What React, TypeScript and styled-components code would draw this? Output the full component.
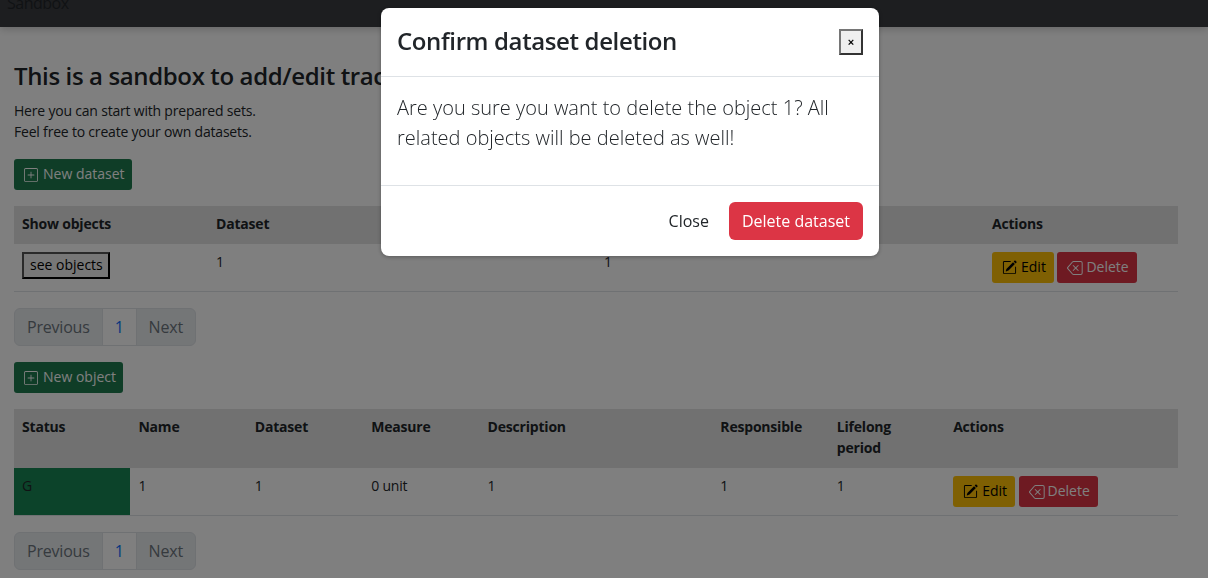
import React from "react";
import styled, { createGlobalStyle } from "styled-components";
import { BsBackspace, BsPencilSquare, BsPlusSquare } from "react-icons/bs";

const GlobalStyle = createGlobalStyle`
  html, body {
    margin: 0;
    height: 100%;
    overflow: hidden;
    background: #ffffff;
  }
  body {
    font-family: "Open Sans", "Noto Sans", sans-serif;
    font-size: 14px;
    line-height: 21px;
    letter-spacing: -0.2px;
    color: #212529;
  }
  * {
    box-sizing: border-box;
  }
`;

const Navbar = styled.nav`
  height: 27px;
  padding-left: 7px;
  overflow: hidden;
  background: #3a3c40;
  box-shadow: 0 2px 8px rgba(0, 0, 0, 0.2);
  font-size: 16px;
  line-height: 6px;
  letter-spacing: -0.5px;
  color: #212529;
`;

const Main = styled.main`
  display: flex;
  flex-direction: column;
  align-items: flex-start;
  padding: 34px 30px 0 14px;
`;

const Title = styled.h1`
  margin: 0 0 10px;
  font-size: 24px;
  line-height: 29px;
  font-weight: 600;
  letter-spacing: -0.37px;
  white-space: nowrap;
`;

const Intro = styled.p`
  margin: 0 0 17px;
`;

// icon + gap always takes 19px, only the glyph width differs
const Button = styled.button<{ $bg: string; $fg: string; $icon: number }>`
  display: inline-flex;
  align-items: center;
  gap: ${(p) => 19 - p.$icon}px;
  height: 31px;
  padding: 0 7px 2px 10px;
  border: 0;
  border-radius: 3px;
  background: ${(p) => p.$bg};
  color: ${(p) => p.$fg};
  font: inherit;
  svg {
    width: ${(p) => p.$icon}px;
    height: ${(p) => p.$icon}px;
    margin-top: 2px;
  }
`;

const Table = styled.table`
  width: 100%;
  margin: 16px 0;
  border-collapse: collapse;
  table-layout: fixed;
`;

const Head = styled.th<{ $width: number }>`
  width: ${(p) => p.$width}px;
  padding: 7px 8px 9px;
  background: #e2e2e2;
  border-bottom: 1px solid #e2e2e2;
  font-weight: 700;
  text-align: left;
  vertical-align: top;
`;

const Cell = styled.td<{ $status?: boolean }>`
  height: 47px;
  padding: 8px;
  border-bottom: 1px solid #dee2e6;
  background: ${(p) => (p.$status ? "#198754" : "transparent")};
  line-height: 19px;
  vertical-align: top;
`;

const Actions = styled.div`
  display: flex;
  gap: 3.5px;
  button {
    padding-right: 8px;
  }
`;

const NativeButton = styled.button`
  display: block;
  height: 27px;
  padding: 0 5px 2px 6px;
  border: 2px solid;
  border-color: #555555 #000000 #000000 #555555;
  background: #efefef;
  color: #000000;
  font: inherit;
  line-height: 21px;
`;

const Pagination = styled.ul`
  display: flex;
  margin: 0 0 16px;
  padding: 0;
  list-style: none;
  font-size: 16px;
  line-height: 24px;
`;

const PageLink = styled.li<{ $active?: boolean; $pos?: "first" | "last" }>`
  padding: 6px 12px;
  margin-left: ${(p) => (p.$pos === "first" ? 0 : "-1px")};
  border: 1px solid #dee2e6;
  border-radius: ${(p) =>
    p.$pos === "first" ? "6px 0 0 6px" : p.$pos === "last" ? "0 6px 6px 0" : 0};
  background: ${(p) => (p.$active ? "#ffffff" : "#e9ecef")};
  color: ${(p) => (p.$active ? "#0d6efd" : "#6c757d")};
`;

const Backdrop = styled.div`
  position: fixed;
  inset: 0;
  background: rgba(0, 0, 0, 0.5);
`;

const Modal = styled.section`
  position: fixed;
  top: 8px;
  left: 381px;
  width: 498px;
  border-radius: 8px;
  background: #ffffff;
  box-shadow: 0 1px 4px rgba(0, 0, 0, 0.3);
`;

const ModalHeader = styled.header`
  display: flex;
  align-items: center;
  justify-content: space-between;
  height: 69px;
  padding: 0 16px;
  border-bottom: 1px solid #dee2e6;
`;

const ModalTitle = styled.h2`
  margin: 0 0 4px;
  font-size: 24px;
  line-height: 29px;
  font-weight: 600;
  letter-spacing: -0.37px;
`;

const CloseX = styled.button`
  width: 24px;
  height: 26px;
  padding: 0;
  border: 2px solid;
  border-color: #767676 #333333 #333333 #767676;
  background: #efefef;
  color: #000000;
  font-size: 11px;
  font-weight: 700;
  line-height: 20px;
`;

const ModalBody = styled.div`
  height: 109px;
  padding: 16px;
  border-bottom: 1px solid #dee2e6;
  font-size: 20px;
  line-height: 30px;
  font-weight: 300;
  letter-spacing: 0;
`;

const ModalFooter = styled.footer`
  display: flex;
  align-items: center;
  justify-content: flex-end;
  gap: 8px;
  height: 70px;
  padding: 0 16px;
  font-size: 16px;
`;

const LinkButton = styled.button`
  height: 38px;
  padding: 0 12px;
  border: 0;
  background: transparent;
  color: #212529;
  font: inherit;
`;

const DangerButton = styled(LinkButton)`
  padding: 0 13px;
  border-radius: 6px;
  background: #dc3545;
  color: #ffffff;
`;

const DATASET_COLS = [194, 194, 194, 194, 194, 194];
const OBJECT_COLS = [116.4, 116.4, 116.4, 116.4, 232.8, 116.4, 116.4, 232.8];
const OBJECT_HEADS = ["Status", "Name", "Dataset", "Measure", "Description", "Responsible", "Lifelong period", "Actions"];

const Pager = () => (
  <Pagination>
    <PageLink $pos="first">Previous</PageLink>
    <PageLink $active>1</PageLink>
    <PageLink $pos="last">Next</PageLink>
  </Pagination>
);

const RowActions = () => (
  <Actions>
    <Button $bg="#ffc107" $fg="#000000" $icon={15}>
      <BsPencilSquare /> Edit
    </Button>
    <Button $bg="#dc3545" $fg="#ffffff" $icon={16}>
      <BsBackspace /> Delete
    </Button>
  </Actions>
);

export default function App() {
  const datasetHeads = ["Show objects", "Dataset", "", "", "", "Actions"];

  return (
    <>
      <GlobalStyle />
      <Navbar>Sandbox</Navbar>
      <Main>
        <Title>This is a sandbox to add/edit tracked objects</Title>
        <Intro>
          Here you can start with prepared sets.
          <br />
          Feel free to create your own datasets.
        </Intro>
        <Button $bg="#1e7b4f" $fg="#ffffff" $icon={14}>
          <BsPlusSquare /> New dataset
        </Button>
        <Table>
          <thead>
            <tr>
              {datasetHeads.map((head, i) => (
                <Head key={i} $width={DATASET_COLS[i]}>
                  {head}
                </Head>
              ))}
            </tr>
          </thead>
          <tbody>
            <tr>
              <Cell>
                <NativeButton>see objects</NativeButton>
              </Cell>
              <Cell>1</Cell>
              <Cell />
              <Cell>1</Cell>
              <Cell />
              <Cell>
                <RowActions />
              </Cell>
            </tr>
          </tbody>
        </Table>
        <Pager />
        <Button $bg="#1e7b4f" $fg="#ffffff" $icon={14}>
          <BsPlusSquare /> New object
        </Button>
        <Table>
          <thead>
            <tr>
              {OBJECT_HEADS.map((head, i) => (
                <Head key={head} $width={OBJECT_COLS[i]}>
                  {head}
                </Head>
              ))}
            </tr>
          </thead>
          <tbody>
            <tr>
              <Cell $status>G</Cell>
              <Cell>1</Cell>
              <Cell>1</Cell>
              <Cell>0 unit</Cell>
              <Cell>1</Cell>
              <Cell>1</Cell>
              <Cell>1</Cell>
              <Cell>
                <RowActions />
              </Cell>
            </tr>
          </tbody>
        </Table>
        <Pager />
      </Main>
      <Backdrop />
      <Modal>
        <ModalHeader>
          <ModalTitle>Confirm dataset deletion</ModalTitle>
          <CloseX>×</CloseX>
        </ModalHeader>
        <ModalBody>
          Are you sure you want to delete the object 1? All related objects will be deleted as well!
        </ModalBody>
        <ModalFooter>
          <LinkButton>Close</LinkButton>
          <DangerButton>Delete dataset</DangerButton>
        </ModalFooter>
      </Modal>
    </>
  );
}
